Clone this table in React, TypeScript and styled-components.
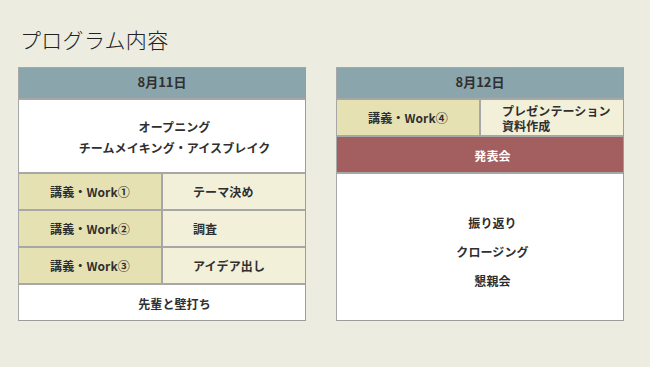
import { FC } from "react";
import styled, { createGlobalStyle } from "styled-components";

const GlobalStyle = createGlobalStyle`
  * { box-sizing: border-box; }
  body {
    margin: 0;
    background: #edece1;
    font-family: "Noto Sans CJK JP", "Noto Sans", sans-serif;
    color: #2f2f2f;
  }
`;

const LINE = "#a7a7a7";

const Page = styled.div`
  width: 650px;
  height: 367px;
  padding: 29px 26px 0 18px;
`;

const Title = styled.h1`
  margin: 0 0 17px 2px;
  font-size: 21px;
  line-height: 21px;
  font-weight: 300;
  letter-spacing: 0.3px;
  color: #222;
`;

const Columns = styled.div`
  display: grid;
  grid-template-columns: 288px 288px;
  column-gap: 30px;
`;

const Table = styled.div`
  display: flex;
  flex-direction: column;
  height: 254px;
  border: 1px solid ${LINE};
  border-right-color: #9c9c9c;
  border-bottom-color: #9c9c9c;
  background: #fff;
`;

const Header = styled.div`
  height: 30px;
  display: flex;
  align-items: center;
  justify-content: center;
  padding-bottom: 3px;
  background: #8aa5ab;
  font-size: 13px;
  font-weight: 700;
`;

const Block = styled.div<{ $h: number; $bg?: string; $light?: boolean; $lh?: number; $pt?: number }>`
  height: ${(p) => p.$h}px;
  border-top: 2px solid ${LINE};
  background: ${(p) => p.$bg ?? "#fff"};
  color: ${(p) => (p.$light ? "#fff" : "inherit")};
  display: flex;
  flex-direction: column;
  align-items: center;
  justify-content: center;
  padding: ${(p) => p.$pt ?? 2}px 0 0 25px;
  font-size: 12px;
  font-weight: 700;
  letter-spacing: 0.1px;
  line-height: ${(p) => p.$lh ?? 20}px;
`;

const Row = styled.div`
  height: 37px;
  border-top: 2px solid ${LINE};
  display: grid;
  grid-template-columns: 144px 1fr;
  font-size: 12px;
  font-weight: 700;
  letter-spacing: 0.1px;
`;

const Label = styled.div`
  background: #e6e1b3;
  border-right: 2px solid ${LINE};
  display: flex;
  align-items: center;
  justify-content: center;
`;

const Topic = styled.div<{ $pad: number }>`
  background: #f3f0da;
  display: flex;
  flex-direction: column;
  justify-content: center;
  padding-left: ${(p) => p.$pad}px;
  line-height: 15px;
`;

const sessions = [
  { label: "講義・Work①", topic: "テーマ決め" },
  { label: "講義・Work②", topic: "調査" },
  { label: "講義・Work③", topic: "アイデア出し" },
];

const App: FC = () => (
  <>
    <GlobalStyle />
    <Page>
      <Title>プログラム内容</Title>
      <Columns>
        <Table>
          <Header>8月11日</Header>
          <Block $h={74} $lh={21.5} $pt={2}>
            <div>オープニング</div>
            <div>チームメイキング・アイスブレイク</div>
          </Block>
          {sessions.map((s) => (
            <Row key={s.label}>
              <Label>{s.label}</Label>
              <Topic $pad={30}>{s.topic}</Topic>
            </Row>
          ))}
          <Block $h={37}>先輩と壁打ち</Block>
        </Table>

        <Table>
          <Header>8月12日</Header>
          <Row>
            <Label>講義・Work④</Label>
            <Topic $pad={21}>
              <div>
                プレゼンテーション
                <br />
                資料作成
              </div>
            </Topic>
          </Row>
          <Block $h={37} $bg="#a35f5f" $light>
            発表会
          </Block>
          <Block $h={148} $lh={29.3} $pt={9}>
            <div>振り返り</div>
            <div>クロージング</div>
            <div>懇親会</div>
          </Block>
        </Table>
      </Columns>
    </Page>
  </>
);

export default App;
